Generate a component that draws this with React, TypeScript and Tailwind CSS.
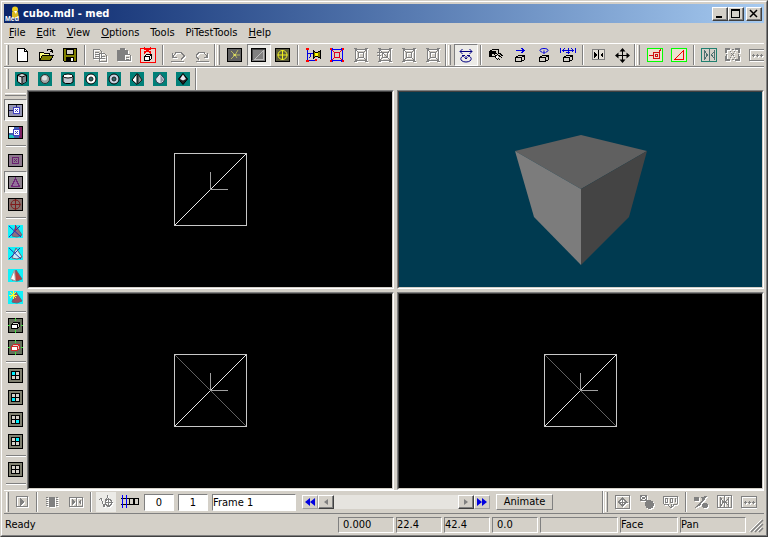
import type { ReactNode } from 'react';
import clsx from 'clsx';

const GRAY = '#808080';

function Ico({ children, size = 16 }: { children: ReactNode; size?: number }) {
  return (
    <svg width={size} height={size} viewBox="0 0 16 16" fill="none" stroke="#000" shapeRendering="crispEdges" aria-hidden="true" className="shrink-0">
      {children}
    </svg>
  );
}

// disabled look: white copy one pixel down-right, gray on top
function Emboss({ d, fill }: { d: string; fill?: string }) {
  return (
    <Ico>
      <g transform="translate(1 1)">
        <path d={d} stroke="#fff" />
        {fill && <path d={fill} fill="#fff" stroke="none" />}
      </g>
      <path d={d} stroke={GRAY} />
      {fill && <path d={fill} fill={GRAY} stroke="none" />}
    </Ico>
  );
}

const FRAME = 'M2.5 2.5h11v11h-11zM5.5 5.5h5v5h-5zM2 2l4 4M14 2l-4 4M2 14l4-4M14 14l-4-4M1 1.5h3M1 14.5h3M12 1.5h3M12 14.5h3';
const MIRROR = 'M.5 1.5h14v12h-14zM7.5 2v12M3.5 4v8l3-4zM11.5 4v8l-3-4z';
const DOTS = 'M.5 2.5h15v11h-15zM3 8.5h3M7 8.5h3M11 8.5h3M4.5 7v3M8.5 7v3M12.5 7v3';

const icons = {
  fresh: (
    <Ico>
      <path d="M3.5 1.5h7l3 3v10h-10z" fill="#fff" />
      <path d="M10.5 1.5v3h3" />
    </Ico>
  ),
  open: (
    <Ico>
      <path d="M1.5 13.5v-8h4l1 1h5v3" fill="#ffff80" />
      <path d="M1.5 13.5l3-5h11l-3 5z" fill="#808000" />
      <path d="M9 3.5l1-1h3l1 1v2M12 4.5h3" />
    </Ico>
  ),
  save: (
    <Ico>
      <path d="M1.5 1.5h13v13h-12l-1-1z" fill="#808000" />
      <path d="M4.5 2v5h7v-5z" fill="#d4d0c8" />
      <path d="M4 10h8v5h-8z" fill="#000" stroke="none" />
      <path d="M9 11h2v3h-2z" fill="#fff" stroke="none" />
    </Ico>
  ),
  copy: <Emboss d="M1.5 2.5h6l2 2v7h-8zM3 5.5h4M3 7.5h4M3 9.5h4M7.5 6.5h5l2 2v6h-7zM9 9.5h4M9 11.5h4" />,
  paste: (
    <Emboss d="M8.5 7.5h5l1 1v5h-6zM10 10.5h3M10 12.5h3" fill="M1 3h3v-2h5v2h3v4h-4v7h-7z" />
  ),
  remove: (
    <Ico>
      <path d="M.5 1.5h15v14h-15z" stroke="#f00" fill="#e8d4cc" />
      <path d="M4.5 9.5h5v4h-5zM4.5 9.5l2-2h5v4l-2 2M9.5 9.5l2-2" fill="#fff" />
      <path d="M4 1l7 5M11 1l-7 5" stroke="#f00" strokeWidth="2" />
    </Ico>
  ),
  undo: <Emboss d="M2.5 6v4h4M3 9.5l3-4h5l3 3v1l-3 3M1 14.5h13" />,
  redo: <Emboss d="M13.5 6v4h-4M13 9.5l-3-4h-5l-3 3v1l3 3M2 14.5h13" />,
  vertex: (
    <Ico>
      <path d="M.5 1.5h14v13h-14z" fill="#626262" />
      <g shapeRendering="auto" stroke="#b8b860">
        <path d="M4 4l4 4l3-5M8 8l-4 4M8 8h5M8 8l2 3" />
        <path d="M6 8h3" stroke="#ffff60" />
      </g>
    </Ico>
  ),
  face: (
    <Ico>
      <path d="M.5 1.5h14v13h-14z" fill="#808080" />
      <path d="M1.5 13v-10.500h12" stroke="#444" />
      <path d="M4 12l8-8v8z" stroke="#bbb" />
    </Ico>
  ),
  object: (
    <Ico>
      <path d="M.5 1.5h14v13h-14z" fill="#5c5c3c" />
      <g shapeRendering="auto" stroke="#f0f020">
        <circle cx="7.5" cy="8" r="4.500" />
        <path d="M7.5 3v10M2.500 8h10" />
      </g>
    </Ico>
  ),
  bones: (
    <Ico>
      <path d="M2.5 2v12M2 6.500h7M4 13.500h7M6.500 6l-2 5" stroke="#0000e0" />
      <path d="M1 1h3v2h-3zM1 13h3v2h-3zM10 12h2v2h-2z" fill="#f00" stroke="none" />
      <path d="M8.500 3.500l2 2h2l3-2v8l-3-2h-2l-2 2z" fill="#808000" />
      <path d="M10 6h3v3h-3z" fill="#ff0" stroke="none" />
    </Ico>
  ),
  skin: (
    <Ico>
      <path d={FRAME} stroke="#0000ff" />
      <path d="M5.500 5.500h5v5h-5zM2 2l3 3M14 2l-3 3M2 14l3-3M14 14l-3-3" stroke="#e00020" />
      <path d="M1 1h2v2h-2zM13 1h2v2h-2zM1 13h2v2h-2zM13 13h2v2h-2z" fill="#f00" stroke="none" />
    </Ico>
  ),
  frameOff: <Emboss d={FRAME} />,
  frameCross: <Emboss d={FRAME + 'M0 5.500h12M3 3l11 11M0 8.500h4M5 5l6 6'} />,
  orbit: (
    <Ico>
      <g stroke="#000080" shapeRendering="auto">
        <path d="M2 4.500h12M4.500 2l-2.500 2.500l2.500 2.500M11.500 2l2.500 2.500l-2.500 2.500" />
        <path d="M6 9c-5 1-4 6 2 6s7-5 2-6M4 8.500h3M9 8.500h3M8 9v3M6.500 10.500l1.500 1.500l1.500-1.500" />
      </g>
    </Ico>
  ),
  pick: (
    <Ico>
      <path d="M1.500 4.500l3-2h6v4l-3 3h-6z" />
      <path d="M2 4h6v3h-4v2h-2z" fill="#000" stroke="none" />
      <path d="M6.500 7.500l6 6M8.500 6.500l6 5M6.500 9.500l4 4M11 6l4 3" />
      <path d="M8 9h2v2h-2z" fill="#fff" stroke="none" />
    </Ico>
  ),
  moveX: <CubeTool d="M4 3.500h8M9.500 1l2.500 2.500l-2.500 2.500" />,
  rotate: <CubeTool d="M6 5c-3-.5-3-3.500 2-3.500s5 3 2 3.500M8 3.500v3M6.500 5l1.500 1.500l1.500-1.500" smooth />,
  scale: <CubeTool d="M.5 1v5M15.500 1v5M2 3.500h12M4.500 1.500l-2 2l2 2M11.500 1.500l2 2l-2 2M8 1v6M6 5h4" />,
  flip: (
    <Ico>
      <path d="M2.500 2.500h12v10h-12z" stroke={GRAY} fill="#e4e0d8" />
      <path d="M8.500 3v9" />
      <path d="M4 5l3 3l-3 3zM13 5l-3 3l3 3z" fill="#000" stroke="none" />
    </Ico>
  ),
  move: (
    <Ico>
      <path d="M8.500 2v12M2 8.500h12" />
      <g shapeRendering="auto">
        <path d="M8.500 1l3 3.500h-6zM8.500 16l3-3.500h-6zM1 8.500l3.500-3v6zM16 8.500l-3.500-3v6z" fill="#000" stroke="none" />
      </g>
    </Ico>
  ),
  faceRed: (
    <Ico>
      <path d="M.5 1.500h15v13h-15z" stroke="#00ff00" fill="#ece0d0" />
      <path d="M2 8.500h5M12 5l2-3M6.500 5.500h6v6h-6z" stroke="#d01010" />
      <path d="M8.500 7.500h2v2h-2z" stroke="#d01010" />
    </Ico>
  ),
  triRed: (
    <Ico>
      <path d="M.5 1.500h15v13h-15z" stroke="#00ff00" fill="#ece0d0" />
      <path d="M3.500 12.500l9-9v9z" stroke="#f00000" />
    </Ico>
  ),
  mirrorOn: (
    <Ico>
      <path d="M.5 1.500h15v13h-15z" stroke="#208070" />
      <path d="M8.500 2v12M3.500 4v8l3-4zM13.500 4v8l-3-4z" stroke="#507070" />
    </Ico>
  ),
  expand: (
    <Emboss
      d="M6 6l3 3M9 6l-3 3M7 2.500h2M7 12.500h2M1.500 7v2M13.500 7v2M5 4.500h1M9 4.500h1M5 10.500h1M9 10.500h1"
      fill="M0 1h5v2h-3v3h-2zM15 1h-5v2h3v3h2zM0 14h5v-2h-3v-3h-2zM15 14h-5v-2h3v-3h2z"
    />
  ),
  dots: <Emboss d={DOTS} />,
  play: <Emboss d="M2.500 2.500h11v10h-11z" fill="M6 4l5 4l-5 4z" />,
  film: <Emboss d="M2 3.500h2M2 5.500h2M2 7.500h2M2 9.500h2M2 11.500h2M12 3.500h2M12 5.500h2M12 7.500h2M12 9.500h2M12 11.500h2" fill="M5 3h6v10h-6z" />,
  mirrorSmall: <Emboss d="M1.500 3.500h13v9h-13zM8.500 3v10" fill="M4 5l3 3l-3 3zM13 5l-3 3l3 3z" />,
  keys: <Emboss d="M1 5.500l2-1l3 8l4-11M6.500 8.500h8M10.500 4v9M7.500 6l2-1h2l2 2v3l-2 2h-2l-2-2z" />,
  timeline: (
    <Ico size={18}>
      <path d="M4 4.500h11.500v6h-11.500M7.500 4v7M11.500 4v7M0 4.500h4M0 10.500h4" />
      <path d="M1.500 2v11M4.500 2v11" stroke="#0000ff" />
    </Ico>
  ),
  target: <Emboss d="M.5 1.500h14v13h-14zM7.500 3v10M3 8.500h10M7.500 4l4 4l-4 4l-4-4z" />,
  ball: <Emboss d="M1.500 1.500h6v5h-6zM2 2l5 4M7 2l-5 4" fill="M6 10.500a4.500 4.500 0 1 0 9 0a4.500 4.500 0 1 0 -9 0z" />,
  counter: <Emboss d="M.5 2.500h14M.5 10.500h5M10 10.500h4M2.500 4v4h2v-4zM7.500 4v4h2v-4zM12.500 4v4M.5 2v8M14.500 2v8M8 10v4M5 11l3 3l3-3" />,
  percent: <Emboss d="M4 13l9-10" fill="M1 5a2.500 2.500 0 1 0 5 0a2.500 2.500 0 1 0 -5 0zM9 11.500a3 3 0 1 0 6 0a3 3 0 1 0 -6 0zM8 3l6-1l-4 6zM2 14l4-5l2 2z" />,
  mirrorOff: <Emboss d={MIRROR} />,
};

function CubeTool({ d, smooth }: { d: string; smooth?: boolean }) {
  return (
    <Ico>
      <path d="M3.500 10.500h6v4h-6zM3.500 10.500l3-2h6l-3 2M12.500 8.500v4l-3 2" />
      <path d={d} stroke="#0000e0" shapeRendering={smooth ? 'auto' : 'crispEdges'} />
    </Ico>
  );
}

function Prim({ children }: { children: ReactNode }) {
  return (
    <Ico>
      <path d="M1 1h14v14h-14z" fill="#008078" stroke="none" />
      <g shapeRendering="auto">{children}</g>
    </Ico>
  );
}

function Ring({ color }: { color: string }) {
  return (
    <Prim>
      <circle cx="8" cy="8" r="5" fill={color} />
      <circle cx="8" cy="8" r="2" fill="#306868" stroke="#202020" />
    </Prim>
  );
}

const primitives: [string, ReactNode][] = [
  ['Cube', <Prim><path d="M3.500 4l4.500-1.500l4.500 1.500v6.500l-4.500 3l-4.500-3z" fill="#d8dce0" /><path d="M8 6l4-1.500v6l-4 2.500z" fill="#808890" stroke="none" /><path d="M4 4.500l4 1.500l4-1.500M8 6v7" /></Prim>],
  ['Sphere', <Prim><circle cx="8" cy="8" r="4.500" fill="#a0a8a8" stroke="#303030" /><circle cx="7.500" cy="7" r="2.500" fill="#e0e0e0" stroke="none" /></Prim>],
  ['Cylinder', <Prim><path d="M3 5v6l2.500 1.500h5l2.500-1.500v-6" fill="#c0c4cc" /><ellipse cx="8" cy="5" rx="5" ry="2" fill="#fff" /></Prim>],
  ['Torus', <Ring color="#fff" />],
  ['Tube', <Ring color="#c8d0e0" />],
  ['Cone', <Prim><path d="M8 2.500v11l-5-4.500z" fill="#fff" stroke="#000" /><path d="M9 3l4 6l-4 4z" fill="#8c9494" stroke="#222" /></Prim>],
  ['Drop', <Prim><path d="M8 2.500l4.500 5.500l-1 3l-3.500 2l-3.500-2l-1-3z" fill="#e0e4ec" stroke="#304050" /><path d="M8.500 4l3 5l-3 3z" fill="#8890a0" stroke="none" /></Prim>],
  ['Diamond', <Prim><path d="M8 2.500l4.500 5.500l-4.500 5.500l-4.500-5.500z" fill="#222" /><path d="M8 3.500l3 4.500l-3 1.500l-3-1.500z" fill="#e8e8f0" stroke="none" /></Prim>],
];

function Plate({ bg, children }: { bg: string; children: ReactNode }) {
  return (
    <Ico>
      <path d="M.5 2.500h14v12h-14z" fill={bg} />
      {children}
    </Ico>
  );
}

function Hull({ bright, children }: { bright?: string; children?: ReactNode }) {
  return (
    <Ico>
      <path d="M0 1h15v13h-15z" fill="#10f0f8" stroke="none" />
      <g shapeRendering="auto">
        {bright && <path d="M8 2l6 9l-5 2l-5-1z" fill={bright} stroke="#667" />}
        {children}
      </g>
    </Ico>
  );
}

const paneSpots = ['M4 4h3v3h-3z', 'M4 8h3v3h-3z', 'M8 8h3v3h-3z', 'M8 4h3v3h-3z'];

function Panes({ on }: { on?: number }) {
  return (
    <Ico>
      <path d="M.5 .5h14v14h-14z" fill="#808070" />
      <path d="M3.500 3.500h8v8h-8zM7.500 3v9M3 7.500h9" fill="#d4d0c8" />
      {on !== undefined && <path d={paneSpots[on]} fill="#00f0ff" stroke="none" />}
    </Ico>
  );
}

function BoxPlate({ line }: { line: string }) {
  return (
    <Ico>
      <path d="M.5 .5h14v14h-14z" fill="#66705c" />
      <path d="M3.500 6.500l2-2h6v4l-2 2" stroke={line} fill="#d8d8d0" />
      <path d="M3.500 6.500h6v4h-6zM9.500 6.500l2-2" stroke={line} fill="#fff" />
      <path d="M7.500 0v3M7.500 12v3M0 7.500h2M13 7.500h2" stroke="#40e040" />
    </Ico>
  );
}

type Tool = { label: string; icon: ReactNode; on?: boolean } | '|';

const sideTools: Tool[] = [
  { label: 'Lock view', on: true, icon: <Plate bg="#9494b0"><path d="M1 8.500h5M8.500 3v3" stroke="#202060" /><path d="M5.500 5.500h6v6h-6z" fill="#fff" stroke="#4040c0" /><path d="M7 7l3 3M10 7l-3 3" stroke="#4040c0" /></Plate> },
  { label: 'Texture view', icon: <Plate bg="#4060b0"><path d="M1 3h5v6h-5z" fill="#fff" stroke="none" /><path d="M1 11h5v3h-5z" fill="#20c0c0" stroke="none" /><path d="M11 3h3v11h-3z" fill="#802060" stroke="none" /><path d="M5.500 5.500h6v6h-6z" fill="#fff" stroke="#4040c0" /><path d="M7 7l3 3M10 7l-3 3" stroke="#4040c0" /></Plate> },
  '|',
  { label: 'Select vertices', icon: <Plate bg="#8c788c"><path d="M4.500 5.500h6v6h-6zM6 7l3 3M9 7l-3 3" stroke="#6a2070" /></Plate> },
  { label: 'Select faces', on: true, icon: <Plate bg="#8c808c"><path d="M3.500 12.500h8l-4-8z" stroke="#702878" fill="#94709c" /></Plate> },
  { label: 'Select objects', icon: <Plate bg="#84706c"><g shapeRendering="auto" stroke="#801c1c"><circle cx="7.500" cy="8.500" r="4.500" /><path d="M7.500 3v11M2.500 8.500h10" /></g></Plate> },
  '|',
  { label: 'Hide selected', icon: <Hull bright="#90707c"><path d="M1 2l12 11M12 2l-11 11" stroke="#2030c0" /><path d="M7.500 1v6" stroke="#a02060" /></Hull> },
  { label: 'Hide unselected', icon: <Hull bright="#c8ecf8"><path d="M1 2l12 11M12 2l-11 11" stroke="#2040b0" /></Hull> },
  { label: 'Unhide', icon: <Hull bright="#b84040"><path d="M6.500 2l-4 9l5 2z" fill="#fff" stroke="#a0a0a0" /></Hull> },
  { label: 'Highlight', icon: <Hull bright="#a05060"><path d="M5.500 1v8M1 5.500h8M2 2l6 6M8 2l-6 6" stroke="#ffff30" /></Hull> },
  '|',
  { label: 'Solid box', icon: <BoxPlate line="#000" /> },
  { label: 'Selected box', icon: <BoxPlate line="#d02828" /> },
  '|',
  { label: 'View 1', icon: <Panes on={0} /> },
  { label: 'View 2', icon: <Panes on={1} /> },
  { label: 'View 3', icon: <Panes on={2} /> },
  { label: 'View 4', icon: <Panes on={3} /> },
  '|',
  { label: 'All views', icon: <Panes /> },
  '|',
];

const fileTools: Tool[] = [
  { label: 'New', icon: icons.fresh },
  { label: 'Open', icon: icons.open },
  { label: 'Save', icon: icons.save },
  '|',
  { label: 'Copy', icon: icons.copy },
  { label: 'Paste', icon: icons.paste },
  { label: 'Delete', icon: icons.remove },
  '|',
  { label: 'Undo', icon: icons.undo },
  { label: 'Redo', icon: icons.redo },
];

const modeTools: Tool[] = [
  { label: 'Vertex mode', icon: icons.vertex },
  { label: 'Face mode', icon: icons.face, on: true },
  { label: 'Object mode', icon: icons.object },
  '|',
  { label: 'Bones', icon: icons.bones },
  { label: 'Skin', icon: icons.skin },
  { label: 'Extrude', icon: icons.frameOff },
  { label: 'Cut', icon: icons.frameCross },
  { label: 'Inset', icon: icons.frameOff },
  { label: 'Outset', icon: icons.frameOff },
];

const transformTools: Tool[] = [
  { label: 'Orbit', icon: icons.orbit, on: true },
  '|',
  { label: 'Pick', icon: icons.pick },
  { label: 'Translate', icon: icons.moveX },
  { label: 'Rotate', icon: icons.rotate },
  { label: 'Scale', icon: icons.scale },
  '|',
  { label: 'Flip', icon: icons.flip },
  { label: 'Move', icon: icons.move },
];

const meshTools: Tool[] = [
  { label: 'Face center', icon: icons.faceRed },
  { label: 'Triangle', icon: icons.triRed },
  '|',
  { label: 'Mirror', icon: icons.mirrorOn },
  { label: 'Expand', icon: icons.expand },
  { label: 'Align', icon: icons.dots },
];

const keyTools: Tool[] = [
  { label: 'Target', icon: icons.target },
  { label: 'Material', icon: icons.ball },
  { label: 'Counter', icon: icons.counter },
  '|',
  { label: 'Ratio', icon: icons.percent },
  { label: 'Mirror keys', icon: icons.mirrorOff },
  { label: 'Align keys', icon: icons.dots },
];

const pressed = 'border border-t-[#808080] border-l-[#808080] border-r-white border-b-white bg-[#ecebe7]';
const raised = 'border border-t-white border-l-white border-r-[#404040] border-b-[#404040] bg-[#d4d0c8] shadow-[inset_-1px_-1px_0_#808080]';
const sunken = 'border border-t-[#808080] border-l-[#808080] border-r-white border-b-white';

function VSep() {
  return <span className="mx-0.5 h-5 w-0.5 shrink-0 border-l border-l-[#808080] border-r border-r-white" />;
}

function Grip({ first }: { first?: boolean }) {
  return (
    <span className={clsx('flex shrink-0 items-stretch self-stretch', first ? 'w-1.5 justify-center' : 'w-[9px] justify-between pr-[3px]')}>
      {!first && <span className="w-0.5 border-l border-l-[#808080] border-r border-r-white" />}
      <span className="my-px w-[3px] border-r border-r-[#808080] border-l border-l-white" />
    </span>
  );
}

function Tools({ items }: { items: Tool[] }) {
  return (
    <>
      {items.map((t, i) =>
        t === '|' ? (
          <VSep key={i} />
        ) : (
          <button key={i} aria-label={t.label} className={clsx('flex h-[22px] w-6 shrink-0 items-center justify-center', t.on && pressed)}>
            {t.icon}
          </button>
        )
      )}
    </>
  );
}

function TitleBar() {
  return (
    <header className="flex h-[19px] items-center bg-linear-to-r from-[#0a246a] to-[#a6caf0] pr-0.5">
      <svg width="16" height="16" viewBox="0 0 16 16" className="ml-px" aria-hidden="true">
        <circle cx="10" cy="3.500" r="3" fill="#f0d020" />
        <path d="M7 6l3-2l3 2l1 6h-7z" fill="#d8b820" />
        <path d="M9 5l2 3l1-3" fill="#fff" />
        <text x="0" y="15" fontSize="7" fill="#fff" fontFamily="Liberation Sans, sans-serif" fontWeight="bold">Med</text>
      </svg>
      <h1 className="flex-1 pl-0.5 font-bold text-white">cubo.mdl - med</h1>
      <button aria-label="Minimize" className={clsx('flex h-3.5 w-4 items-center justify-center', raised)}>
        <svg width="12" height="10" aria-hidden="true"><path d="M2 7h6v2h-6z" /></svg>
      </button>
      <button aria-label="Maximize" className={clsx('mr-0.5 flex h-3.5 w-4 items-center justify-center', raised)}>
        <svg width="12" height="10" fill="none" stroke="#000" shapeRendering="crispEdges" aria-hidden="true"><path d="M1.500 .5h8v8h-8zM1 1.500h9" /></svg>
      </button>
      <button aria-label="Close" className={clsx('flex h-3.5 w-4 items-center justify-center', raised)}>
        <svg width="12" height="10" stroke="#000" strokeWidth="1.500" aria-hidden="true"><path d="M2 1l7 7M9 1l-7 7" /></svg>
      </button>
    </header>
  );
}

const menus = ['File', 'Edit', 'View', 'Options', 'Tools', 'PiTestTools', 'Help'];
const noMnemonic = ['Tools', 'PiTestTools'];

function MenuBar() {
  return (
    <nav className="flex h-5 items-center">
      {menus.map((m, i) => (
        <button key={m} className={clsx('pr-1.5', i === 0 ? 'pl-[5px]' : 'pl-[5px]')}>
          {noMnemonic.includes(m) ? m : <><span className="underline">{m[0]}</span>{m.slice(1)}</>}
        </button>
      ))}
    </nav>
  );
}

function SideBar() {
  return (
    <aside className="flex w-[23px] shrink-0 flex-col items-center">
      <div className="flex h-[9px] w-full items-center px-px">
        <span className="h-[3px] w-full border-t border-t-white border-b border-b-[#808080]" />
      </div>
      {sideTools.map((t, i) =>
        t === '|' ? (
          <span key={i} className="my-0.5 h-0.5 w-5 border-t border-t-[#808080] border-b border-b-white" />
        ) : (
          <button key={i} aria-label={t.label} className={clsx('flex h-[22px] w-[23px] items-center justify-center', t.on && pressed)}>
            {t.icon}
          </button>
        )
      )}
    </aside>
  );
}

function Viewport({ bg = 'bg-black', children }: { bg?: string; children: ReactNode }) {
  return (
    <section className="border border-t-[#808080] border-l-[#808080] border-r-white border-b-white">
      <div className={clsx('flex h-full items-center justify-center border border-t-[#404040] border-l-[#404040] border-r-[#d4d0c8] border-b-[#d4d0c8]', bg)}>
        {children}
      </div>
    </section>
  );
}

function Wire({ crossed }: { crossed?: boolean }) {
  return (
    <svg width="73" height="73" viewBox="0 0 73 73" fill="none" stroke="#c8c8c8" shapeRendering="crispEdges" aria-hidden="true">
      {crossed && <path d="M1 1l71 71" stroke="#606060" shapeRendering="auto" />}
      <path d="M.5 .5h72v72h-72z" />
      <path d="M1 72l71-71" stroke="#e8e8e8" shapeRendering="auto" />
      <path d="M36.500 19v18M36 36.500h18" stroke="#a0a0a0" />
    </svg>
  );
}

function SolidCube() {
  return (
    <svg width="132" height="152" viewBox="0 -22 132 152" aria-hidden="true">
      <path d="M0 16L66 0L132 16L66 54z" fill="#606060" />
      <path d="M0 16L66 54V130L19 82z" fill="#7c7c7c" />
      <path d="M132 16L66 54V130L114 82z" fill="#444" />
    </svg>
  );
}

function FrameBar() {
  return (
    <div className="flex h-6 items-center border-t border-t-white border-b border-b-[#808080]">
      <Grip first />
      <Tools items={[{ label: 'Play', icon: icons.play }, '|', { label: 'Film', icon: icons.film }, { label: 'Mirror frame', icon: icons.mirrorSmall }, '|']} />
      <button aria-label="Keyframes" className="ml-0.5 flex h-5 w-5 shrink-0 items-center justify-center bg-[#ecebe7]">{icons.keys}</button>
      <button aria-label="Timeline" className="mx-1 flex h-5 w-5 shrink-0 items-center justify-center">{icons.timeline}</button>
      <input aria-label="First frame" defaultValue="0" className={clsx('mr-1 h-[17px] w-[30px] bg-white text-center', sunken)} />
      <input aria-label="Last frame" defaultValue="1" className={clsx('mr-1 h-[17px] w-[30px] bg-white text-center', sunken)} />
      <input aria-label="Frame name" defaultValue="Frame 1" className={clsx('h-[17px] w-[84px] bg-white', sunken)} />
      <button aria-label="Rewind" className="ml-1.5 flex h-3.5 w-4 shrink-0 items-center justify-center border border-white border-r-[#a0a0a0] border-b-[#a0a0a0]">
        <svg width="10" height="8" fill="#0000e0" aria-hidden="true"><path d="M5 0v8l-5-4zM10 0v8l-5-4z" /></svg>
      </button>
      <div className="flex h-3.5 w-[156px] shrink-0 justify-between bg-[#e6e4df]">
        <button aria-label="Scroll left" className={clsx('flex w-4 items-center justify-center', raised)}>
          <svg width="4" height="6" fill="#808080" aria-hidden="true"><path d="M4 0v6l-4-3z" /></svg>
        </button>
        <button aria-label="Scroll right" className={clsx('flex w-4 items-center justify-center', raised)}>
          <svg width="4" height="6" fill="#808080" aria-hidden="true"><path d="M0 0v6l4-3z" /></svg>
        </button>
      </div>
      <button aria-label="Forward" className="flex h-3.5 w-4 shrink-0 items-center justify-center border border-white border-r-[#a0a0a0] border-b-[#a0a0a0]">
        <svg width="10" height="8" fill="#0000e0" aria-hidden="true"><path d="M0 0v8l5-4zM5 0v8l5-4z" /></svg>
      </button>
      <button className="ml-1.5 h-4 w-[57px] shrink-0 border border-white border-r-[#808080] border-b-[#808080]">Animate</button>
      <div className="ml-auto flex items-center self-stretch pr-[3px]">
        <Grip />
        <Tools items={keyTools} />
      </div>
    </div>
  );
}

const cells: { text: string; width: string }[] = [
  { text: '0.000', width: 'w-14 pl-1' },
  { text: '22.4', width: 'w-[46px]' },
  { text: '42.4', width: 'w-[46px]' },
  { text: '0.0', width: 'w-[46px] pl-1' },
  { text: '', width: 'w-[78px]' },
  { text: 'Face', width: 'w-[58px]' },
  { text: 'Pan', width: 'w-[66px]' },
];

function StatusBar() {
  return (
    <footer className="flex h-[19px] items-center gap-0.5 pl-px pt-0.5">
      <span className="flex-1">Ready</span>
      {cells.map((c, i) => (
        <span key={i} className={clsx('h-4 leading-[14px]', c.width, sunken)}>{c.text}</span>
      ))}
      <svg width="16" height="16" stroke="#808080" strokeWidth="1.500" aria-hidden="true">
        <path d="M3 15l12-12M7 15l8-8M11 15l4-4" />
        <path d="M2 15l12-12M6 15l8-8M10 15l4-4" stroke="#fff" strokeWidth="1" transform="translate(-.5 -.5)" />
      </svg>
    </footer>
  );
}

export default function App() {
  return (
    <div className="flex min-h-screen flex-col border border-t-[#d4d0c8] border-l-[#d4d0c8] border-r-[#404040] border-b-[#404040] bg-[#d4d0c8] font-['DejaVu_Sans_Condensed','DejaVu_Sans',sans-serif] text-[11px] leading-[14px] text-black">
      <div className="flex flex-1 flex-col border border-t-white border-l-white border-r-[#808080] border-b-[#808080] p-0.5">
        <TitleBar />
        <MenuBar />
        <div className="flex h-6 items-center overflow-hidden border-t border-t-white border-b border-b-[#808080]">
          <Grip first />
          <Tools items={fileTools} />
          <Grip />
          <Tools items={modeTools} />
          <Grip />
          <Tools items={transformTools} />
          <Grip />
          <Tools items={meshTools} />
        </div>
        <div className="flex h-[23px] border-t border-t-white">
          <div className="flex items-center border-r border-r-[#808080] pr-px shadow-[1px_0_0_#fff]">
            <Grip first />
            {primitives.map(([label, icon]) => (
              <button key={label} aria-label={label} className="flex h-5 w-[23px] items-center justify-center">
                {icon}
              </button>
            ))}
          </div>
        </div>
        <main className="flex flex-1">
          <SideBar />
          <div className="grid flex-1 grid-cols-2 grid-rows-2 gap-[3px]">
            <Viewport><Wire /></Viewport>
            <Viewport bg="bg-[#003a50]"><SolidCube /></Viewport>
            <Viewport><Wire crossed /></Viewport>
            <Viewport><Wire crossed /></Viewport>
          </div>
        </main>
        <FrameBar />
        <StatusBar />
      </div>
    </div>
  );
}
